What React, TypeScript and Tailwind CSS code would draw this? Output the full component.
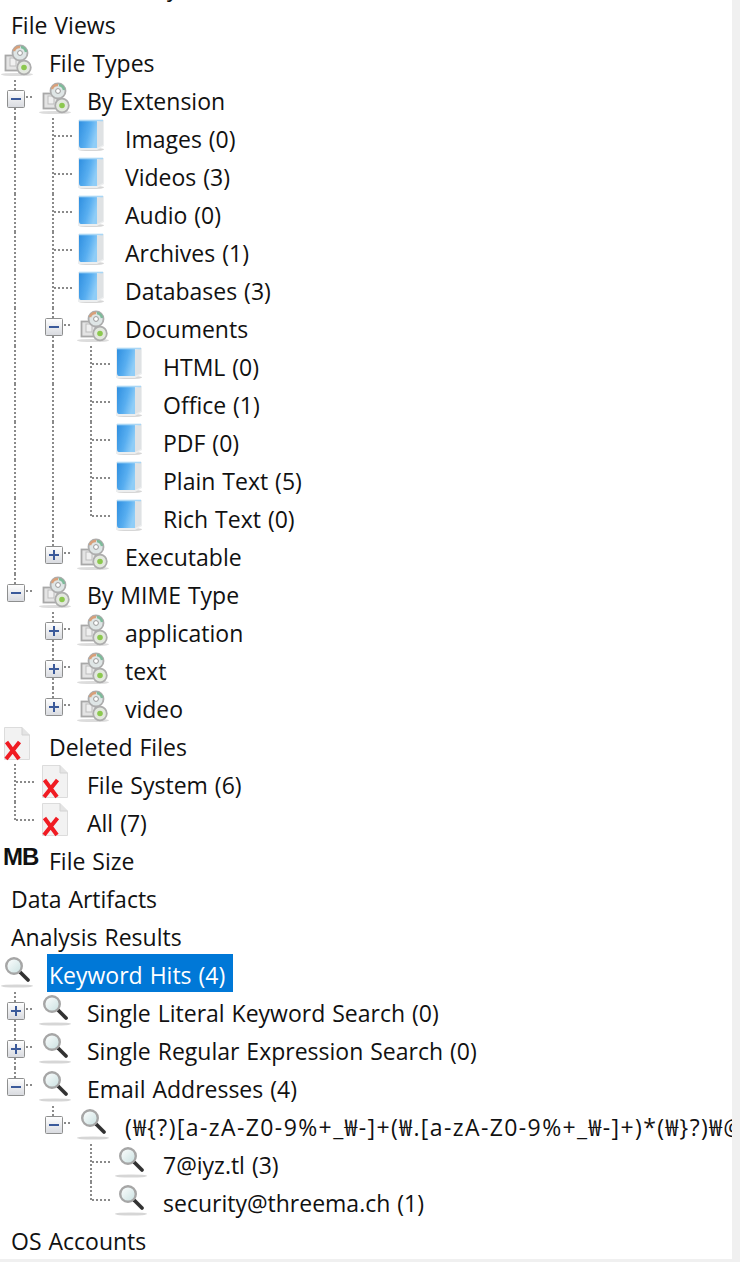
import React from 'react'

type IconName = 'types' | 'doc' | 'deleted' | 'mb' | 'search'

interface TreeRow {
  label: string
  guides?: string
  icon?: IconName
  selected?: boolean
  wide?: boolean
}

// guides: i = line, t = tee, l = corner, p/P = plus box, m/M = minus box (capital = nothing below)
const rows: TreeRow[] = [
  { label: 'File Views' },
  { label: 'File Types', icon: 'types' },
  { label: 'By Extension', icon: 'types', guides: 'm' },
  { label: 'Images (0)', icon: 'doc', guides: 'it' },
  { label: 'Videos (3)', icon: 'doc', guides: 'it' },
  { label: 'Audio (0)', icon: 'doc', guides: 'it' },
  { label: 'Archives (1)', icon: 'doc', guides: 'it' },
  { label: 'Databases (3)', icon: 'doc', guides: 'it' },
  { label: 'Documents', icon: 'types', guides: 'im' },
  { label: 'HTML (0)', icon: 'doc', guides: 'iit' },
  { label: 'Office (1)', icon: 'doc', guides: 'iit' },
  { label: 'PDF (0)', icon: 'doc', guides: 'iit' },
  { label: 'Plain Text (5)', icon: 'doc', guides: 'iit' },
  { label: 'Rich Text (0)', icon: 'doc', guides: 'iil' },
  { label: 'Executable', icon: 'types', guides: 'iP' },
  { label: 'By MIME Type', icon: 'types', guides: 'M' },
  { label: 'application', icon: 'types', guides: ' p' },
  { label: 'text', icon: 'types', guides: ' p' },
  { label: 'video', icon: 'types', guides: ' P' },
  { label: 'Deleted Files', icon: 'deleted' },
  { label: 'File System (6)', icon: 'deleted', guides: 't' },
  { label: 'All (7)', icon: 'deleted', guides: 'l' },
  { label: 'File Size', icon: 'mb' },
  { label: 'Data Artifacts' },
  { label: 'Analysis Results' },
  { label: 'Keyword Hits (4)', icon: 'search', selected: true },
  { label: 'Single Literal Keyword Search (0)', icon: 'search', guides: 'p' },
  { label: 'Single Regular Expression Search (0)', icon: 'search', guides: 'p' },
  { label: 'Email Addresses (4)', icon: 'search', guides: 'M' },
  { label: '(₩{?)[a-zA-Z0-9%+_₩-]+(₩.[a-zA-Z0-9%+_₩-]+)*(₩}?)₩@', icon: 'search', guides: ' M', wide: true },
  { label: '7@iyz.tl (3)', icon: 'search', guides: '  t' },
  { label: 'security@threema.ch (1)', icon: 'search', guides: '  l' },
  { label: 'OS Accounts' }
]

const Guide = ({ kind }: { kind: string }) => {
  const dots = { stroke: '#8a8a8a', strokeWidth: 2, strokeDasharray: '2 2' }
  const box = 'pPmM'.includes(kind)
  return (
    <svg width="38" height="38" className="shrink-0">
      {kind === 'i' && <line x1="15" y1="0" x2="15" y2="38" {...dots} />}
      {kind === 't' && <line x1="15" y1="0" x2="15" y2="38" {...dots} />}
      {kind === 'l' && <line x1="15" y1="0" x2="15" y2="19" {...dots} />}
      {(kind === 't' || kind === 'l') && <line x1="16" y1="18" x2="34" y2="18" {...dots} />}
      {box && (
        <>
          <line x1="15" y1="0" x2="15" y2="10" {...dots} />
          {(kind === 'p' || kind === 'm') && <line x1="15" y1="28" x2="15" y2="38" {...dots} />}
          <line x1="26" y1="17" x2="34" y2="17" {...dots} />
          <rect x="7.5" y="10.5" width="17" height="17" rx="1" fill="url(#boxFill)" stroke="#8e8f8f" />
          <rect x="11" y="18" width="10" height="2" fill="#3b5a9a" />
          {(kind === 'p' || kind === 'P') && <rect x="15" y="14" width="2" height="10" fill="#3b5a9a" />}
        </>
      )}
    </svg>
  )
}

const Icon = ({ name }: { name: IconName }) => {
  if (name === 'mb') {
    return (
      <div className="w-[38px] h-[38px] shrink-0 relative">
        <span className="absolute left-[3px] top-[3px] text-[24px] leading-[28px] font-bold text-[#111] font-['Liberation_Sans',sans-serif] tracking-[-1px]">
          MB
        </span>
      </div>
    )
  }
  return (
    <svg width="38" height="38" className="shrink-0">
      {name === 'types' && (
        <g filter="url(#soft)">
          <ellipse cx="17" cy="32.5" rx="16" ry="1.6" fill="#c4c4c4" opacity="0.6" />
          <rect x="5.5" y="13.5" width="14" height="15" fill="#e4e4e4" stroke="#a8a8a8" strokeWidth="1.8" />
          <rect x="10" y="16" width="6" height="8" fill="#f0f0f0" stroke="#bdbdbd" />
          <circle cx="20" cy="11" r="7.5" fill="#dfe6e6" stroke="#adadad" strokeWidth="1.8" />
          <path d="M14 9a6 6 0 0 1 6-4" stroke="#d8a07a" strokeWidth="2.4" fill="none" />
          <path d="M21 5a6 6 0 0 1 5 5" stroke="#7dbb9a" strokeWidth="2.4" fill="none" />
          <circle cx="20" cy="11" r="2.4" fill="#fff" stroke="#999" />
          <circle cx="24" cy="25.5" r="6.8" fill="#e3e8df" stroke="#adadad" strokeWidth="1.8" />
          <circle cx="24" cy="25.5" r="2.8" fill="#8cc850" />
        </g>
      )}
      {name === 'doc' && (
        <g filter="url(#softer)">
          <ellipse cx="15" cy="31.5" rx="13" ry="1.6" fill="#c4c4c4" opacity="0.7" />
          <path d="M2 2H28V28L21 32H2Z" fill="#eceeef" />
          <path d="M21 4L27 2.5V27L21 30Z" fill="#dfe2e4" />
          <path d="M3 3H21V30H5Q3 30 3 27Z" fill="url(#blue)" />
          <path d="M3 2.5H27" stroke="#a9d6f5" strokeWidth="1.6" />
        </g>
      )}
      {name === 'deleted' && (
        <>
          <g filter="url(#soft)">
            <path d="M4.5 1.5H22L29.5 9V33.5H4.5Z" fill="#f2f2f2" stroke="#dcdcdc" />
            <path d="M22 1.5V9H29.5" fill="#e4e4e4" stroke="#d2d2d2" />
          </g>
          <path d="M6.5 16L19 33M19.5 16L6 33" stroke="#f01a24" strokeWidth="4" fill="none" filter="url(#softer)" />
        </>
      )}
      {name === 'search' && (
        <>
          <ellipse cx="17" cy="32" rx="16" ry="1.6" fill="#b5b5b5" opacity="0.55" filter="url(#soft)" />
          <g filter="url(#softer)">
            <line x1="20" y1="18" x2="28" y2="26" stroke="#333333" strokeWidth="3.8" strokeLinecap="round" />
            <circle cx="14" cy="12" r="7.8" fill="url(#lens)" stroke="#a6a6a6" strokeWidth="2.4" />
          </g>
        </>
      )}
    </svg>
  )
}

const Row = ({ row }: { row: TreeRow }) => {
  const guides = row.guides ? row.guides.split('') : []
  return (
    <div className="flex h-[38px] shrink-0 items-stretch">
      {guides.map((g, i) => (
        <Guide key={i} kind={g} />
      ))}
      {row.icon ? (
        <div className="flex shrink-0 w-[47px]">
          <Icon name={row.icon} />
        </div>
      ) : (
        <div className="w-[9px] shrink-0" />
      )}
      <div
        className={`pl-[2px] leading-[38px] whitespace-nowrap ${
          row.selected ? 'pr-[8px] bg-[#0078d7] text-white' : 'pr-[6px] text-[#111]'
        } ${row.wide ? 'tracking-[1.4px]' : ''}`}
      >
        <span className="relative top-[2px]">{row.label}</span>
      </div>
    </div>
  )
}

export default function App() {
  return (
    <div className="w-[740px] h-[1262px] bg-[#f0f0f0] overflow-hidden font-['Open_Sans','Noto_Sans_CJK_KR',sans-serif] text-[23px] [word-spacing:1px]">
      <svg width="0" height="0" className="absolute">
        <defs>
          <filter id="soft" x="-20%" y="-20%" width="140%" height="140%">
            <feGaussianBlur stdDeviation="0.7" />
          </filter>
          <filter id="softer" x="-20%" y="-20%" width="140%" height="140%">
            <feGaussianBlur stdDeviation="0.5" />
          </filter>
          <linearGradient id="blue" x1="0" y1="0" x2="1" y2="0.4">
            <stop offset="0" stopColor="#2f8fe0" />
            <stop offset="0.6" stopColor="#58aef0" />
            <stop offset="1" stopColor="#8fcdf7" />
          </linearGradient>
          <linearGradient id="boxFill" x1="0" y1="0" x2="0" y2="1">
            <stop offset="0" stopColor="#ffffff" />
            <stop offset="1" stopColor="#d8dadf" />
          </linearGradient>
          <linearGradient id="lens" x1="0" y1="0" x2="1" y2="1">
            <stop offset="0" stopColor="#ffffff" />
            <stop offset="1" stopColor="#c8e0e0" />
          </linearGradient>
        </defs>
      </svg>
      <div className="w-[732px] h-[1259px] bg-white overflow-hidden flex flex-col">
        <div className="h-[38px] shrink-0 -mt-[34px] pl-[167px] leading-[38px] text-[#111]">
          <span className="relative top-[2px]">y</span>
        </div>
        {rows.map((row, i) => (
          <Row key={i} row={row} />
        ))}
      </div>
    </div>
  )
}
